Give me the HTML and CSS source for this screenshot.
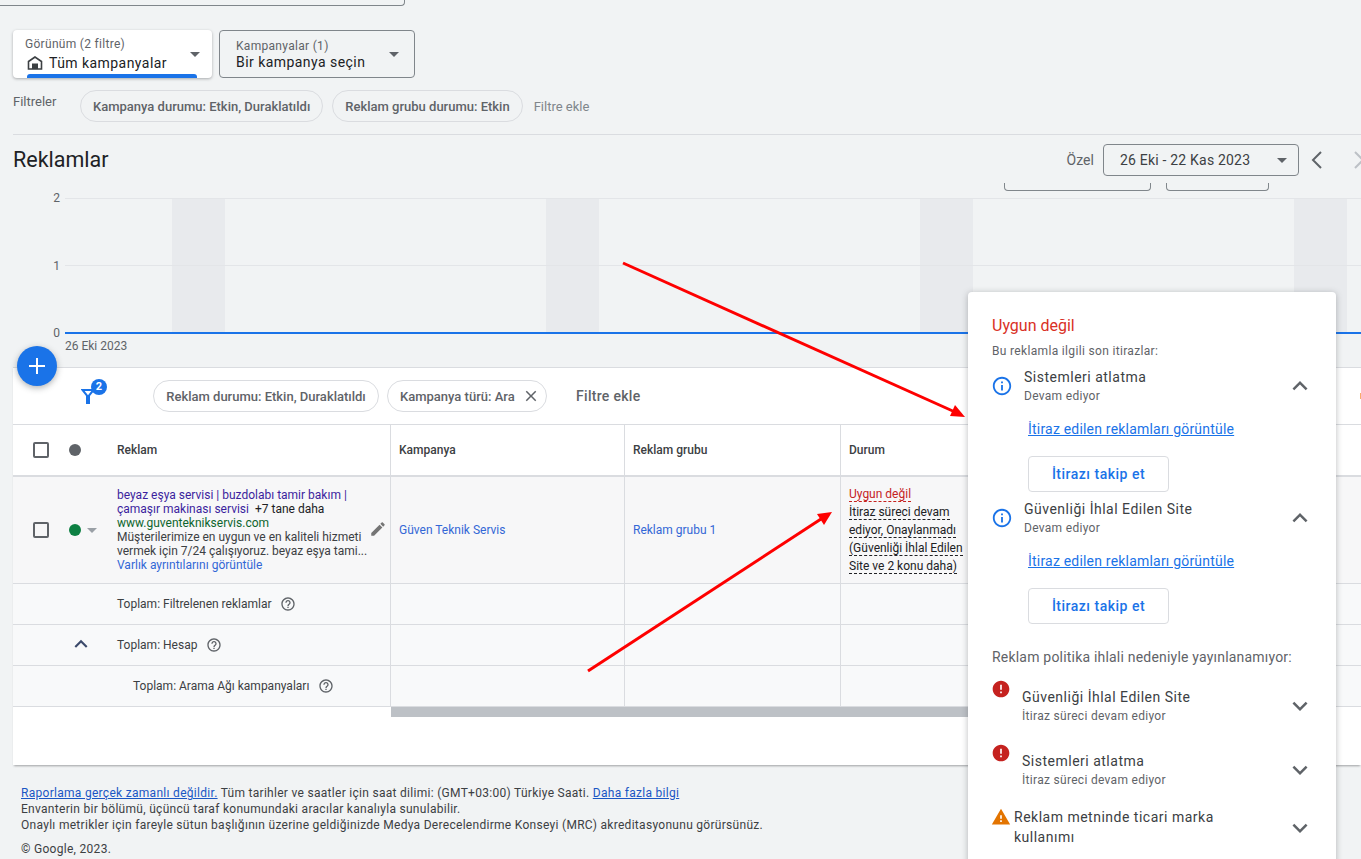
FILE: index.html
```html
<!DOCTYPE html>
<html lang="tr">
  <head>
    <meta charset="utf-8">
    <title>Reklamlar</title>
    <link rel="stylesheet" href="styles.css">
  </head>
  <body>
    <svg class="sprite">
      <symbol id="i-drop" viewBox="0 0 24 24"><path d="M7 10l5 5 5-5z"/></symbol>
      <symbol id="i-up" viewBox="0 0 24 24"><path d="M7.41 15.41L12 10.83l4.59 4.58L18 14l-6-6-6 6z"/></symbol>
      <symbol id="i-down" viewBox="0 0 24 24"><path d="M7.41 8.59L12 13.17l4.59-4.58L18 10l-6 6-6-6z"/></symbol>
      <symbol id="i-info" viewBox="0 0 24 24"><path d="M11 7h2v2h-2zm0 4h2v6h-2zm1-9C6.48 2 2 6.48 2 12s4.48 10 10 10 10-4.48 10-10S17.52 2 12 2zm0 18c-4.41 0-8-3.59-8-8s3.59-8 8-8 8 3.59 8 8-3.59 8-8 8z"/></symbol>
      <symbol id="i-help" viewBox="0 0 24 24"><path d="M11 18h2v-2h-2v2zm1-16C6.48 2 2 6.48 2 12s4.48 10 10 10 10-4.48 10-10S17.52 2 12 2zm0 18c-4.41 0-8-3.59-8-8s3.59-8 8-8 8 3.59 8 8-3.59 8-8 8zm0-14c-2.21 0-4 1.79-4 4h2c0-1.1.9-2 2-2s2 .9 2 2c0 2-3 1.75-3 5h2c0-2.25 3-2.5 3-5 0-2.21-1.79-4-4-4z"/></symbol>
      <symbol id="i-error" viewBox="0 0 24 24"><path d="M12 2C6.48 2 2 6.48 2 12s4.48 10 10 10 10-4.48 10-10S17.52 2 12 2zm1 15h-2v-2h2v2zm0-4h-2V7h2v6z"/></symbol>
      <symbol id="i-warn" viewBox="0 0 24 24"><path d="M1 21h22L12 2 1 21zm12-3h-2v-2h2v2zm0-4h-2v-4h2v4z"/></symbol>
      <symbol id="i-edit" viewBox="0 0 24 24"><path d="M3 17.25V21h3.75L17.81 9.94l-3.75-3.75L3 17.25zM20.71 7.04c.39-.39.39-1.02 0-1.41l-2.34-2.34c-.39-.39-1.02-.39-1.41 0l-1.83 1.83 3.75 3.75 1.83-1.83z"/></symbol>
      <symbol id="i-close" viewBox="0 0 24 24"><path d="M19 6.41L17.59 5 12 10.59 6.41 5 5 6.41 10.59 12 5 17.59 6.41 19 12 13.41 17.59 19 19 17.59 13.41 12z"/></symbol>
    </svg>

    <div class="top-stub"></div>

    <div class="selectors">
      <div class="selector selector-active">
        <div class="selector-label">Görünüm (2 filtre)</div>
        <div class="selector-value">
          <svg class="home-icon" viewBox="0 0 16 14"><path d="M8 1L1.500 5.500V13h13V5.500z" fill="none" stroke="#3c4043" stroke-width="1.6"/><rect x="5" y="7.500" width="6" height="5.500" fill="#3c4043"/></svg>
          Tüm kampanyalar
        </div>
        <svg class="selector-caret"><use href="#i-drop"/></svg>
      </div>
      <div class="selector selector-plain">
        <div class="selector-label">Kampanyalar (1)</div>
        <div class="selector-value">Bir kampanya seçin</div>
        <svg class="selector-caret"><use href="#i-drop"/></svg>
      </div>
    </div>

    <div class="filters">
      <span class="filters-label">Filtreler</span>
      <span class="chip chip-page">Kampanya durumu: Etkin, Duraklatıldı</span>
      <span class="chip chip-page">Reklam grubu durumu: Etkin</span>
      <span class="filters-add">Filtre ekle</span>
    </div>

    <div class="title-row">
      <h1>Reklamlar</h1>
      <span class="range-label">Özel</span>
      <div class="range-box">
        26 Eki - 22 Kas 2023
        <svg class="range-caret"><use href="#i-drop"/></svg>
      </div>
      <svg class="nav-arrow" viewBox="0 0 14 20"><path d="M11 2L3 10l8 8" fill="none" stroke="#5f6368" stroke-width="2"/></svg>
      <svg class="nav-arrow nav-off" viewBox="0 0 14 20"><path d="M3 2l8 8-8 8" fill="none" stroke="#bdc1c6" stroke-width="2"/></svg>
    </div>

    <div class="toolbar-stub">
      <div class="stub-btn stub-wide"></div>
      <div class="stub-btn stub-narrow"></div>
      <span class="stub-text">Grafik türü</span>
    </div>

    <svg class="chart" viewBox="0 0 1361 176">
      <rect class="band" x="172" y="7" width="53" height="134"/>
      <rect class="band" x="546" y="7" width="53" height="134"/>
      <rect class="band" x="920" y="7" width="53" height="134"/>
      <rect class="band" x="1294" y="7" width="53" height="134"/>
      <line class="grid" x1="65" y1="7.500" x2="1361" y2="7.500"/>
      <line class="grid" x1="65" y1="74.500" x2="1361" y2="74.500"/>
      <line class="base" x1="65" y1="142" x2="1361" y2="142"/>
      <text class="tick" x="60" y="11" text-anchor="end">2</text>
      <text class="tick" x="60" y="79" text-anchor="end">1</text>
      <text class="tick" x="60" y="146" text-anchor="end">0</text>
      <text class="tick" x="65" y="159">26 Eki 2023</text>
    </svg>

    <section class="card">
      <div class="card-filters">
        <div class="funnel">
          <svg viewBox="0 0 14 16" width="14" height="16"><path d="M1.500 2h11L8 7.500V15H6V7.500z" fill="none" stroke="#1a73e8" stroke-width="2"/></svg>
          <span class="funnel-badge">2</span>
        </div>
        <span class="chip chip-ad">Reklam durumu: Etkin, Duraklatıldı</span>
        <span class="chip chip-type">Kampanya türü: Ara <svg class="chip-x"><use href="#i-close"/></svg></span>
        <span class="card-add">Filtre ekle</span>
        <span class="warn-stub"></span>
      </div>

      <div class="row row-head">
        <div class="cell cell-ad">
          <span class="check"></span>
          <span class="dot dot-grey"></span>
          <span class="ad-head">Reklam</span>
        </div>
        <div class="cell">Kampanya</div>
        <div class="cell">Reklam grubu</div>
        <div class="cell">Durum</div>
        <div class="cell"></div>
      </div>

      <div class="row row-data">
        <div class="cell cell-ad">
          <span class="check"></span>
          <span class="dot dot-green"></span>
          <svg class="dot-caret"><use href="#i-drop"/></svg>
          <div class="ad-text">
            <div class="ad-headline">beyaz eşya servisi | buzdolabı tamir bakım |<br>çamaşır makinası servisi <span class="ad-more">&nbsp;+7 tane daha</span></div>
            <div class="ad-url">www.guventeknikservis.com</div>
            <div class="ad-desc">Müşterilerimize en uygun ve en kaliteli hizmeti<br>vermek için 7/24 çalışıyoruz. beyaz eşya tami...</div>
            <div class="link">Varlık ayrıntılarını görüntüle</div>
          </div>
          <svg class="edit-icon"><use href="#i-edit"/></svg>
        </div>
        <div class="cell link">Güven Teknik Servis</div>
        <div class="cell link">Reklam grubu 1</div>
        <div class="cell cell-status">
          <span class="status-red">Uygun değil</span><br>
          <span class="status-dash">İtiraz süreci devam</span><br>
          <span class="status-dash">ediyor, Onaylanmadı</span><br>
          <span class="status-dash">(Güvenliği İhlal Edilen</span><br>
          <span class="status-dash">Site ve 2 konu daha)</span>
        </div>
        <div class="cell"></div>
      </div>

      <div class="row row-total">
        <div class="cell cell-ad cell-total">Toplam: Filtrelenen reklamlar <svg class="help"><use href="#i-help"/></svg></div>
        <div class="cell"></div><div class="cell"></div><div class="cell"></div><div class="cell"></div>
      </div>
      <div class="row row-total">
        <div class="cell cell-ad cell-total">
          <svg class="total-toggle"><use href="#i-up"/></svg>
          Toplam: Hesap <svg class="help"><use href="#i-help"/></svg>
        </div>
        <div class="cell"></div><div class="cell"></div><div class="cell"></div><div class="cell"></div>
      </div>
      <div class="row row-total">
        <div class="cell cell-ad cell-total cell-sub">Toplam: Arama Ağı kampanyaları <svg class="help"><use href="#i-help"/></svg></div>
        <div class="cell"></div><div class="cell"></div><div class="cell"></div><div class="cell"></div>
      </div>

      <div class="scrollbar"></div>
    </section>

    <footer class="foot">
      <div><a href="#">Raporlama gerçek zamanlı değildir.</a> Tüm tarihler ve saatler için saat dilimi: (GMT+03:00) Türkiye Saati. <a href="#">Daha fazla bilgi</a></div>
      <div>Envanterin bir bölümü, üçüncü taraf konumundaki aracılar kanalıyla sunulabilir.</div>
      <div>Onaylı metrikler için fareyle sütun başlığının üzerine geldiğinizde Medya Derecelendirme Konseyi (MRC) akreditasyonunu görürsünüz.</div>
      <div class="foot-copy">© Google, 2023.</div>
    </footer>

    <button class="fab"><svg viewBox="0 0 16 16" width="16" height="16"><path d="M7 0h2v7h7v2H9v7H7V9H0V7h7z" fill="#fff"/></svg></button>

    <!-- kirmizi oklar, ekran goruntusunun uzerine cizilmis -->
    <svg class="arrows" viewBox="0 0 1361 859">
      <line x1="623" y1="263" x2="955" y2="412"/>
      <polygon points="965,417 950,416 955,405"/>
      <line x1="588" y1="671" x2="821" y2="519"/>
      <polygon points="832,512 824,525 817,514"/>
    </svg>

    <aside class="panel">
      <div class="panel-title">Uygun değil</div>
      <div class="panel-sub">Bu reklamla ilgili son itirazlar:</div>

      <div class="appeal">
        <div class="appeal-head">
          <svg class="appeal-icon"><use href="#i-info"/></svg>
          <div class="appeal-text">
            <div class="item-title">Sistemleri atlatma</div>
            <div class="item-sub">Devam ediyor</div>
          </div>
          <svg class="chev"><use href="#i-up"/></svg>
        </div>
        <a class="appeal-link" href="#">İtiraz edilen reklamları görüntüle</a>
        <div class="appeal-btn">İtirazı takip et</div>
      </div>

      <div class="appeal">
        <div class="appeal-head">
          <svg class="appeal-icon"><use href="#i-info"/></svg>
          <div class="appeal-text">
            <div class="item-title">Güvenliği İhlal Edilen Site</div>
            <div class="item-sub">Devam ediyor</div>
          </div>
          <svg class="chev"><use href="#i-up"/></svg>
        </div>
        <a class="appeal-link" href="#">İtiraz edilen reklamları görüntüle</a>
        <div class="appeal-btn">İtirazı takip et</div>
      </div>

      <div class="policy-title">Reklam politika ihlali nedeniyle yayınlanamıyor:</div>

      <div class="policy">
        <svg class="policy-icon"><use href="#i-error"/></svg>
        <div class="policy-text">
          <div class="item-title">Güvenliği İhlal Edilen Site</div>
          <div class="item-sub">İtiraz süreci devam ediyor</div>
        </div>
        <svg class="chev"><use href="#i-down"/></svg>
      </div>
      <div class="policy">
        <svg class="policy-icon"><use href="#i-error"/></svg>
        <div class="policy-text">
          <div class="item-title">Sistemleri atlatma</div>
          <div class="item-sub">İtiraz süreci devam ediyor</div>
        </div>
        <svg class="chev"><use href="#i-down"/></svg>
      </div>
      <div class="policy policy-warn">
        <svg class="warn-icon"><use href="#i-warn"/></svg>
        <div class="warn-title">Reklam metninde ticari marka kullanımı</div>
        <svg class="chev"><use href="#i-down"/></svg>
      </div>
    </aside>
  </body>
</html>
```

FILE: styles.css
```css
html, body {
  height: 100%;
  margin: 0;
  overflow: hidden;
}
body {
  position: relative;
  font-family: Roboto, "Liberation Sans", sans-serif;
  font-size: 12px;
  color: #3c4043;
  background-color: #f1f3f4;
}
.sprite {
  display: none;
}
.top-stub {
  box-sizing: border-box;
  width: 405px;
  height: 6px;
  border: 1px solid #80868b;
  border-top: none;
  border-left: none;
  border-radius: 0 0 4px 0;
}

/* selectors */
.selectors {
  display: flex;
  gap: 7px;
  margin: 24px 0 0 13px;
}
.selector {
  position: relative;
  box-sizing: border-box;
  height: 48px;
  border-radius: 4px;
}
.selector-active {
  width: 199px;
  padding: 7px 0 0 12px;
  background: white;
  box-shadow: 0 1px 3px rgba(60, 64, 67, 0.4);
}
.selector-active::after {
  content: "";
  position: absolute;
  left: 14px;
  right: 15px;
  bottom: 0;
  height: 4px;
  border-radius: 3px 3px 0 0;
  background-color: #1a73e8;
}
.selector-plain {
  width: 196px;
  padding: 8px 0 0 16px;
  border: 1px solid #80868b;
}
.selector-label {
  line-height: 14px;
  letter-spacing: 0.3px;
  color: #5f6368;
}
.selector-value {
  display: flex;
  align-items: center;
  margin-top: 3px;
  font-size: 14px;
  line-height: 18px;
  letter-spacing: 0.45px;
  color: #202124;
}
.selector-plain .selector-value {
  margin-top: 0;
}
.home-icon {
  width: 16px;
  height: 14px;
  margin: 0 6px 0 2px;
}
.selector-caret {
  position: absolute;
  right: 5px;
  top: 12px;
  width: 24px;
  height: 24px;
  fill: #5f6368;
}
.selector-plain .selector-caret {
  right: 8px;
  top: 11px;
}

/* filters */
.filters {
  display: flex;
  align-items: center;
  height: 32px;
  margin: 12px 0 12px 13px;
}
.filters-label {
  width: 67px;
  margin-top: -9px;
  font-size: 13px;
  color: #5f6368;
}
.chip {
  display: flex;
  align-items: center;
  box-sizing: border-box;
  height: 32px;
  border: 1px solid #dadce0;
  border-radius: 16px;
  font-size: 13px;
  font-weight: 500;
  white-space: nowrap;
  color: #5f6368;
}
.chip-page {
  padding: 0 12px;
  margin-right: 9px;
}
.filters-add {
  margin-left: 2px;
  font-size: 13px;
  color: #80868b;
}
.title-row {
  display: flex;
  align-items: center;
  box-sizing: border-box;
  height: 42px;
  margin-left: 13px;
  padding: 9px 0 1px;
  border-top: 1px solid #dadce0;
}
h1 {
  margin: 0 auto 0 0;
  font-size: 21.5px;
  font-weight: 400;
  color: #202124;
}
.range-label {
  margin-right: 9px;
  font-size: 14px;
  letter-spacing: 0.05px;
  color: #5f6368;
}
.range-box {
  position: relative;
  box-sizing: border-box;
  width: 196px;
  height: 32px;
  padding-left: 16px;
  border: 1px solid #80868b;
  border-radius: 4px;
  font-size: 14px;
  line-height: 30px;
  letter-spacing: 0.2px;
  color: #3c4043;
}
.range-caret {
  position: absolute;
  right: 4px;
  top: 3px;
  width: 24px;
  height: 24px;
  fill: #5f6368;
}
.nav-arrow {
  flex: none;
  width: 14px;
  height: 20px;
  margin-left: 11px;
}
.nav-off {
  margin-left: 28px;
  margin-right: -5px;
}
.toolbar-stub {
  display: flex;
  height: 8px;
  margin-top: 7px;
  padding-left: 1004px;
  overflow: hidden;
}
.stub-btn {
  box-sizing: border-box;
  height: 8px;
  border: 1px solid #80868b;
  border-top: none;
  border-radius: 0 0 4px 4px;
}
.stub-wide {
  width: 147px;
  margin-right: 15px;
}
.stub-narrow {
  width: 103px;
  margin-right: 36px;
}
.stub-text {
  margin-top: -11px;
  line-height: 14px;
  white-space: nowrap;
  color: #5f6368;
}

/* chart */
.chart {
  display: block;
  width: 1361px;
  height: 176px;
}
.band {
  fill: #e8eaed;
}
.grid {
  stroke: #e3e5e8;
  stroke-width: 1;
}
.base {
  stroke: #1a73e8;
  stroke-width: 2;
}
.tick {
  font-size: 12px;
  fill: #5f6368;
}

/* table card */
.card {
  height: 398px;
  margin-left: 13px;
  background: white;
  box-shadow: 0 2px 2px -1px rgba(60, 64, 67, 0.45);
}
.card-filters {
  display: flex;
  align-items: center;
  box-sizing: border-box;
  height: 58px;
  padding-left: 140px;
  border-top: 1px solid #dadce0;
  border-bottom: 1px solid #dadce0;
}
.funnel {
  position: relative;
  margin: 0 0 0 -72px;
  width: 72px;
  line-height: 0;
}
.funnel-badge {
  position: absolute;
  left: 10px;
  top: -9px;
  width: 16px;
  height: 16px;
  border-radius: 50%;
  background-color: #1a73e8;
  color: white;
  font-size: 11px;
  font-weight: 700;
  line-height: 16px;
  text-align: center;
}
.chip-ad {
  width: 226px;
  justify-content: center;
  margin-right: 8px;
}
.chip-type {
  width: 160px;
  padding-left: 12px;
}
.chip-x {
  width: 18px;
  height: 18px;
  margin-left: 7px;
  fill: #5f6368;
}
.card-add {
  margin-left: 29px;
  font-size: 14px;
  font-weight: 500;
  letter-spacing: 0.3px;
  color: #5f6368;
}
.warn-stub {
  width: 1px;
  height: 6px;
  margin-left: auto;
  background-color: #f9ab6b;
}
.row {
  display: grid;
  box-sizing: border-box;
  grid-template-columns: 378px 234px 216px 136px 1fr;
  border-bottom: 1px solid #dadce0;
}
.cell {
  display: flex;
  align-items: center;
  box-sizing: border-box;
  padding-left: 8px;
  border-right: 1px solid #dadce0;
}
.cell:last-child {
  border-right: none;
}
.row-head {
  height: 52px;
  border-bottom: 2px solid #dadce0;
  font-weight: 500;
  color: #3c4043;
}
.row-data {
  height: 107px;
  background-color: #f7f7f8;
}
.row-total {
  height: 41px;
  background-color: #f8f9fa;
}
.cell-ad {
  position: relative;
  padding-left: 20px;
}
.check {
  flex: none;
  box-sizing: border-box;
  width: 16px;
  height: 16px;
  border: 2px solid #5f6368;
  border-radius: 2px;
}
.dot {
  flex: none;
  width: 12px;
  height: 12px;
  margin-left: 20px;
  border-radius: 50%;
}
.dot-grey {
  background-color: #5f6368;
}
.dot-green {
  background-color: #0d8043;
}
.dot-caret {
  flex: none;
  width: 24px;
  height: 24px;
  margin-left: -1px;
  fill: #9aa0a6;
}
.ad-head {
  margin-left: 36px;
}
.ad-text {
  margin-left: 13px;
  line-height: 14px;
  white-space: nowrap;
}
.ad-headline {
  color: #3c1f9e;
}
.ad-more {
  color: #202124;
}
.ad-url {
  color: #0d652d;
}
.ad-desc {
  color: #3c4043;
}
.link {
  color: #3367d6;
}
.edit-icon {
  position: absolute;
  right: 3px;
  top: 43px;
  width: 18px;
  height: 18px;
  fill: #757575;
}
.cell-status {
  display: block;
  padding-top: 8px;
  line-height: 18px;
  white-space: nowrap;
  color: #202124;
}
.status-red {
  border-bottom: 1px dashed #c5221f;
  color: #c5221f;
}
.status-dash {
  border-bottom: 1px dashed #202124;
}
.cell-total {
  padding-left: 104px;
}
.cell-sub {
  padding-left: 120px;
}
.help {
  width: 16px;
  height: 16px;
  margin-left: 9px;
  fill: #5f6368;
}
.total-toggle {
  position: absolute;
  left: 55px;
  top: 6px;
  width: 26px;
  height: 26px;
  fill: #3c4a6b;
}
.scrollbar {
  width: 600px;
  height: 10px;
  margin-left: 378px;
  background-color: #bdc1c6;
}

/* footer */
.foot {
  padding: 20px 0 0 21px;
  line-height: 16px;
  letter-spacing: 0.29px;
  color: #3c4043;
}
.foot a {
  color: #1a56c4;
}
.foot-copy {
  margin-top: 8px;
}

/* overlays */
.fab {
  position: absolute;
  left: 17px;
  top: 346px;
  display: flex;
  align-items: center;
  justify-content: center;
  width: 40px;
  height: 40px;
  padding: 0;
  border: none;
  border-radius: 50%;
  background-color: #1a73e8;
  box-shadow: 0 2px 6px rgba(60, 64, 67, 0.4);
}
.arrows {
  position: absolute;
  left: 0;
  top: 0;
  width: 1361px;
  height: 859px;
  pointer-events: none;
}
.arrows line {
  stroke: #fe0000;
  stroke-width: 3;
}
.arrows polygon {
  fill: #fe0000;
}
.panel {
  position: absolute;
  left: 968px;
  top: 292px;
  box-sizing: border-box;
  width: 368px;
  height: 600px;
  padding: 24px 24px 0;
  border-radius: 4px;
  background: white;
  box-shadow: 0 1px 6px rgba(60, 64, 67, 0.35);
}
.panel-title {
  font-size: 16px;
  line-height: 20px;
  color: #d93025;
}
.panel-sub {
  margin-top: 8px;
  line-height: 14px;
  letter-spacing: 0.33px;
  color: #5f6368;
}
.appeal {
  height: 132px;
  margin-top: 8px;
  margin-bottom: -8px;
}
.appeal-head {
  display: flex;
  align-items: center;
  height: 40px;
}
.appeal-icon {
  flex: none;
  width: 22px;
  height: 22px;
  margin-left: -1px;
  fill: #1a73e8;
}
.appeal-text {
  flex: 1;
  margin: -2px 0 0 11px;
}
.item-title {
  font-size: 14px;
  line-height: 20px;
  letter-spacing: 0.5px;
  color: #3c4043;
}
.item-sub {
  margin-top: 1px;
  line-height: 16px;
  letter-spacing: 0.3px;
  color: #5f6368;
}
.chev {
  flex: none;
  width: 30px;
  height: 30px;
  margin: -3px;
  fill: #5f6368;
}
.appeal-link {
  display: block;
  margin: 13px 0 0 36px;
  font-size: 14px;
  line-height: 20px;
  letter-spacing: 0.2px;
  color: #1a73e8;
}
.appeal-btn {
  box-sizing: border-box;
  width: 141px;
  height: 36px;
  margin: 17px 0 0 36px;
  border: 1px solid #dadce0;
  border-radius: 4px;
  font-size: 14px;
  font-weight: 500;
  line-height: 34px;
  letter-spacing: 0.5px;
  text-align: center;
  color: #1a73e8;
}
.policy-title {
  margin: 25px 0 -6px;
  font-size: 14px;
  line-height: 20px;
  letter-spacing: 0.2px;
  color: #5f6368;
}
.policy {
  display: flex;
  align-items: center;
  height: 40px;
  margin-top: 24px;
}
.policy .chev {
  margin: -2px -3px -4px;
}
.policy-icon {
  flex: none;
  align-self: flex-start;
  width: 20px;
  height: 20px;
  margin: -6px 0 0 -1px;
  fill: #c5221f;
}
.policy-text {
  flex: 1;
  margin-left: 11px;
}
.policy-warn {
  align-items: flex-start;
  margin-top: 18px;
}
.warn-icon {
  flex: none;
  width: 20px;
  height: 20px;
  margin-left: -1px;
  fill: #e37400;
}
.warn-title {
  flex: 1;
  margin: 0 40px 0 3px;
  font-size: 14px;
  line-height: 20px;
  letter-spacing: 0.5px;
  color: #3c4043;
}
.policy-warn .chev {
  align-self: center;
}
```
